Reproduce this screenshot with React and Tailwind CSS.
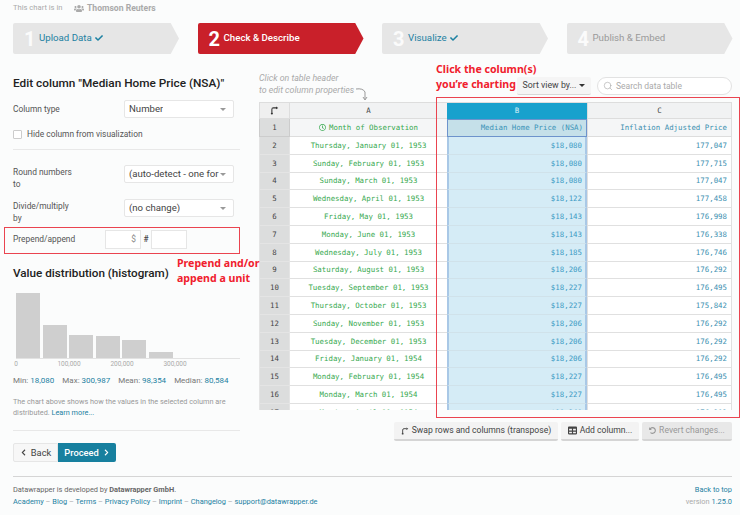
import { FaCheck, FaChevronLeft, FaChevronRight, FaRegClock, FaTable, FaUndoAlt, FaUsers } from 'react-icons/fa'
import { Search } from 'lucide-react'

const ROWS = [
  ['Thursday, January 01, 1953', '$18,080', '177,047'],
  ['Sunday, February 01, 1953', '$18,080', '177,715'],
  ['Sunday, March 01, 1953', '$18,080', '177,047'],
  ['Wednesday, April 01, 1953', '$18,122', '177,458'],
  ['Friday, May 01, 1953', '$18,143', '176,998'],
  ['Monday, June 01, 1953', '$18,143', '176,338'],
  ['Wednesday, July 01, 1953', '$18,185', '176,746'],
  ['Saturday, August 01, 1953', '$18,206', '176,292'],
  ['Tuesday, September 01, 1953', '$18,227', '176,495'],
  ['Thursday, October 01, 1953', '$18,227', '175,842'],
  ['Sunday, November 01, 1953', '$18,206', '176,292'],
  ['Tuesday, December 01, 1953', '$18,206', '176,292'],
  ['Friday, January 01, 1954', '$18,206', '176,292'],
  ['Monday, February 01, 1954', '$18,227', '176,495'],
  ['Monday, March 01, 1954', '$18,227', '176,495'],
  ['Monday, April 01, 1954', '$18,248', '176,292'],
]

const BARS = ['h-[65px]', 'h-[33px]', 'h-[23px]', 'h-[22px]', 'h-[18px]', 'h-[6px]']

function SwapIcon({ className }) {
  return (
    <svg viewBox="0 0 12 12" className={className} fill="none" stroke="currentColor" strokeWidth="1.4">
      <path d="M2.5 9V4.5Q2.5 2.5 4.5 2.5H8" />
      <path d="M8 .6 11 2.5 8 4.4Z" fill="currentColor" stroke="none" />
      <circle cx="2.5" cy="10" r="1.4" fill="currentColor" stroke="none" />
    </svg>
  )
}

function Step({ num, label, state }) {
  const active = state === 'active'
  const done = state === 'done'
  return (
    <div
      className={`flex h-[31px] w-[166px] items-center rounded-l-[2px] pl-[11px] [clip-path:polygon(0_0,95%_0,100%_50%,95%_100%,0_100%)] ${active ? 'bg-[#c9202a] text-white' : 'bg-[#e6e6e6]'}`}
    >
      <span className={`w-[15px] text-[20px] font-bold leading-none ${active ? 'text-white' : 'text-[#fbfbfb]'}`}>{num}</span>
      <span className={`flex items-center gap-[3px] text-[9.7px] ${active ? 'font-medium text-white' : done ? 'text-[#1d81a2]' : 'text-[#9a9a9a]'}`}>
        {label}
        {done && <FaCheck className="h-[8px] w-[8px]" />}
      </span>
    </div>
  )
}

function Select({ children }) {
  return (
    <div className="flex h-[18px] w-[110px] items-center justify-between overflow-hidden rounded-[2px] border border-[#e6e6e6] bg-white pl-[4px] pr-[7px] text-[9.6px] text-[#444]">
      <span className="overflow-hidden whitespace-nowrap">{children}</span>
      <span className="ml-[1px] h-0 w-0 shrink-0 border-x-[3.5px] border-t-[3.5px] border-x-transparent border-t-[#999]" />
    </div>
  )
}

function ToolButton({ children, dim }) {
  return (
    <div
      className={`flex h-[19px] items-center justify-center gap-[3px] whitespace-nowrap rounded-[2px] border-b-2 text-[8.6px] ${dim ? 'border-[#d5d5d5] bg-[#e8e8e8] text-[#999]' : 'border-[#d5d5d5] bg-[#f3f3f3] text-[#444]'}`}
    >
      {children}
    </div>
  )
}

export default function App() {
  return (
    <div className="relative h-[515px] w-[740px] overflow-hidden bg-[#fbfcfc] font-['Roboto',sans-serif] text-[#333]">
      <div className="flex h-[16px] items-center pl-[13px] text-[#aaa]">
        <span className="w-[61px] text-[7.6px]">This chart is in</span>
        <FaUsers className="h-[9px] w-[10px]" />
        <span className="ml-[3px] text-[8.6px] font-bold">Thomson Reuters</span>
      </div>

      <div className="ml-[13px] mt-[7px] flex gap-[18.5px]">
        <Step num="1" label="Upload Data" state="done" />
        <Step num="2" label="Check & Describe" state="active" />
        <Step num="3" label="Visualize" state="done" />
        <Step num="4" label="Publish & Embed" state="todo" />
      </div>

      <div className="ml-[13px] mt-[20px] flex h-[389px]">
        {/* left settings column */}
        <div className="w-[227px] shrink-0">
          <h3 className="mt-[1px] whitespace-nowrap text-[11.8px] font-medium leading-[16px] text-[#222]">Edit column "Median Home Price (NSA)"</h3>
          <div className="mt-[9px] flex items-center text-[8.4px] text-[#555]">
            <span className="w-[111px]">Column type</span>
            <Select>Number</Select>
          </div>
          <label className="mt-[10px] flex items-center gap-[5px] text-[8.4px] leading-[12px] text-[#555]">
            <span className="h-[9px] w-[9px] rounded-[1px] border border-[#ccc] bg-white" />
            Hide column from visualization
          </label>
          <div className="mt-[9px] h-px bg-[#e8e8e8]" />
          <div className="mt-[15px] flex items-start text-[8.4px] leading-[12px] text-[#555]">
            <span className="mt-[1px] w-[111px]">Round numbers<br />to</span>
            <Select>(auto-detect - one for</Select>
          </div>
          <div className="mt-[9px] flex items-start text-[8.4px] leading-[12px] text-[#555]">
            <span className="mt-[1px] w-[111px]">Divide/multiply<br />by</span>
            <Select>(no change)</Select>
          </div>
          <div className="mt-[6px] flex h-[19px] items-center text-[8.4px] text-[#555]">
            <span className="w-[92px]">Prepend/append</span>
            <span className="flex h-[19px] w-[36px] items-center justify-end border border-[#e6e6e6] bg-white pr-[4px] text-[#888]">$</span>
            <span className="w-[10px] text-center font-medium text-[#444]">#</span>
            <span className="h-[19px] w-[36px] border border-[#e6e6e6] bg-white" />
          </div>
          <h3 className="mt-[16px] whitespace-nowrap text-[11.7px] font-medium leading-[16px] text-[#222]">Value distribution (histogram)</h3>

          <div className="ml-[3px] mt-[13px] flex h-[65px] items-end gap-[2.6px] border-b border-[#e2e2e2]">
            {BARS.map((h) => (
              <div key={h} className={`w-[24px] bg-[#cfcfcf] ${h}`} />
            ))}
          </div>
          <div className="ml-[-23.5px] mt-[1px] flex text-[6.5px] leading-[9px] text-[#aaa]">
            {['0', '100,000', '200,000', '300,000'].map((t) => (
              <span key={t} className="w-[53px] text-center">{t}</span>
            ))}
          </div>
          <div className="mt-[6px] flex gap-[8px] whitespace-nowrap text-[8px] leading-[12px] text-[#777]">
            <span>Min: <span className="text-[#1d81a2]">18,080</span></span>
            <span>Max: <span className="text-[#1d81a2]">300,987</span></span>
            <span>Mean: <span className="text-[#1d81a2]">98,354</span></span>
            <span>Median: <span className="text-[#1d81a2]">80,584</span></span>
          </div>
          <p className="mt-[9px] text-[7.3px] leading-[11px] text-[#999]">
            The chart above shows how the values in the selected column are distributed. <span className="text-[#1d81a2]">Learn more...</span>
          </p>
          <div className="mt-[12px] h-px bg-[#e8e8e8]" />
          <div className="mt-[12px] flex h-[19px] text-[9.3px]">
            <div className="flex w-[45px] items-center justify-center gap-[4px] rounded-l-[2px] border border-[#e6e6e6] bg-[#f7f7f7] text-[#444]">
              <FaChevronLeft className="h-[7px] w-[7px]" /> Back
            </div>
            <div className="flex w-[58px] items-center justify-center gap-[4px] rounded-r-[2px] bg-[#17809f] font-medium text-white">
              Proceed <FaChevronRight className="h-[7px] w-[7px]" />
            </div>
          </div>
        </div>

        {/* data table column */}
        <div className="ml-[19px] w-[473px] shrink-0">
          <div className="flex h-[28px] items-start justify-end gap-[6px] pt-[3px]">
            <div className="flex h-[18px] w-[74px] items-center justify-center gap-[3px] rounded-[2px] border-b border-[#d8d8d8] bg-[#f5f5f5] text-[8.8px] text-[#444]">
              Sort view by...
              <span className="h-0 w-0 border-x-[3px] border-t-[3px] border-x-transparent border-t-[#333]" />
            </div>
            <div className="flex h-[18px] w-[135px] items-center gap-[3px] rounded-full border border-[#e2e2e2] bg-white pl-[5px] text-[8.5px] text-[#aaa]">
              <Search className="h-[10px] w-[10px]" strokeWidth={1.5} />
              Search data table
            </div>
          </div>

          <div className="h-[308px] overflow-hidden font-['DejaVu_Sans_Mono',monospace] text-[7.4px]">
            <div className="grid grid-cols-[31px_157px_140px_145px] border-t border-[#ddd]">
              <div className="flex h-[16px] items-center justify-center border-x border-b border-[#ddd] bg-[#efefef] text-[#333]">
                <SwapIcon className="h-[9px] w-[9px]" />
              </div>
              <div className="flex h-[16px] items-center justify-center border-b border-[#ddd] bg-[#f1f2f3] text-[#444]">A</div>
              <div className="flex h-[16px] items-center justify-center bg-[#18a1cd] text-[#d8f0f8]">B</div>
              <div className="flex h-[16px] items-center justify-center border-x border-b border-[#ddd] bg-[#f1f2f3] text-[#444]">C</div>

              <div className="flex h-[18px] items-center justify-center border-x border-b border-[#ccc] bg-[#dcdddd] text-[#444]">1</div>
              <div className="flex h-[18px] items-center justify-center gap-[3px] border-b border-[#ddd] bg-[#f5f6f7] text-[#37a94f]">
                <FaRegClock className="h-[7px] w-[7px]" /> Month of Observation
              </div>
              <div className="flex h-[18px] items-center justify-end border border-[#6d93cc] bg-[#c5e0e9] pr-[3px] text-[#3b94b8]">Median Home Price (NSA)</div>
              <div className="flex h-[18px] items-center justify-end border-x border-b border-[#ddd] bg-[#f5f6f7] pr-[4px] text-[#3b8fb0]">Inflation Adjusted Price</div>

              {ROWS.map((row, i) => (
                <div key={i} className="contents">
                  <div className="flex h-[17.8px] items-center justify-center border-x border-b border-[#e4e4e4] bg-[#dcdddd] text-[#444]">{i + 2}</div>
                  <div className="flex h-[17.8px] items-center justify-center border-b border-[#e0e0e0] bg-white text-[#37a94f]">{row[0]}</div>
                  <div className="flex h-[17.8px] items-center justify-end border-x-2 border-b border-x-[#a9c8e6] border-b-[#d0e2ea] bg-[#d5ecf6] pr-[3px] text-[#3b9ac4]">{row[1]}</div>
                  <div className="flex h-[17.8px] items-center justify-end border-x border-b border-[#e0e0e0] bg-white pr-[4px] text-[#3b8fb0]">{row[2]}</div>
                </div>
              ))}
            </div>
          </div>

          <div className="mt-[12px] flex justify-end gap-[3px]">
            <div className="w-[164px]">
              <ToolButton><SwapIcon className="h-[8px] w-[8px]" /> Swap rows and columns (transpose)</ToolButton>
            </div>
            <div className="w-[78px]">
              <ToolButton><FaTable className="h-[9px] w-[9px]" /> Add column...</ToolButton>
            </div>
            <div className="w-[90px]">
              <ToolButton dim><FaUndoAlt className="h-[7px] w-[7px]" /> Revert changes...</ToolButton>
            </div>
          </div>
        </div>
      </div>

      <footer className="mx-[13px] mt-[13px] flex h-[39px] w-[719px] items-start justify-between border-t border-[#d5d5d5] pt-[7px] text-[7.4px] leading-[12px] text-[#666]">
        <div>
          <div>Datawrapper is developed by <span className="font-bold">Datawrapper GmbH</span>.</div>
          <div className="text-[#1d81a2]">
            Academy <span className="text-[#aaa]">–</span> Blog <span className="text-[#aaa]">–</span> Terms <span className="text-[#aaa]">–</span> Privacy Policy <span className="text-[#aaa]">–</span> Imprint <span className="text-[#aaa]">–</span> Changelog <span className="text-[#aaa]">–</span> support@datawrapper.de
          </div>
        </div>
        <div className="text-right">
          <div className="text-[#1d81a2]">Back to top</div>
          <div className="text-[#aaa]">version <span className="text-[#1d81a2]">1.25.0</span></div>
        </div>
      </footer>

      {/* red annotations pasted over the screenshot */}
      <div className="absolute left-[436px] top-[97px] h-[321px] w-[304px] border border-[#ea4450]" />
      <div className="absolute left-[4px] top-[227px] h-[27px] w-[236px] border border-[#ea4450]" />
      <div className="absolute left-[436px] top-[62px] font-['Noto_Sans',sans-serif] text-[10.6px] font-bold leading-[15px] text-[#f0202d]">
        Click the column(s)<br />you’re charting
      </div>
      <div className="absolute left-[177px] top-[256px] font-['Noto_Sans',sans-serif] text-[10.6px] font-bold leading-[15px] text-[#f0202d]">
        Prepend and/or<br />append a unit
      </div>
      <div className="absolute left-[259px] top-[72px] text-[8.8px] italic leading-[12px] text-[#aaa]">
        Click on table header<br />to edit column properties
      </div>
      <svg className="absolute left-[355px] top-[85px] h-[16px] w-[14px] text-[#999]" viewBox="0 0 14 16" fill="none" stroke="currentColor">
        <path d="M1 4Q8 3 10 7V14" />
        <path d="M8 12 10 15 12 12" />
      </svg>
    </div>
  )
}
